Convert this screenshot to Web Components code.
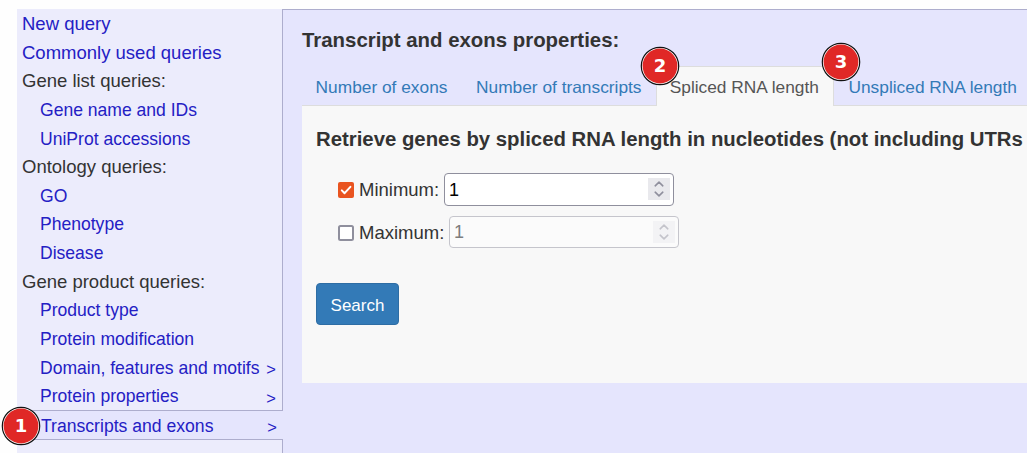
<!DOCTYPE html>
<html lang="en">
<head>
<meta charset="utf-8">
<title>Gene query</title>
<style>
html,body{margin:0;height:100%;overflow:hidden;background:#fefefe}
body{font-family:"Liberation Sans",Arial,sans-serif;font-size:18.5px;color:#333}
</style>
</head>
<body>
<query-page></query-page>
<script>
const define=(name,html)=>customElements.define(name,class extends HTMLElement{
  connectedCallback(){
    if(this.shadowRoot)return;
    this.attachShadow({mode:'open'}).innerHTML=html;
  }
});

define('step-badge',`<style>
:host{position:absolute;z-index:3;display:block;width:40px;height:40px}
svg{position:absolute;inset:0}
span{position:absolute;inset:0;font:bold 18px/39px "DejaVu Sans",sans-serif;color:#fff;text-align:center}
</style><svg width="40" height="40" viewBox="0 0 40 40"><circle cx="20" cy="20" r="18.7" fill="#fff" stroke="#111" stroke-width="1.2"/><circle cx="20" cy="20" r="17.4" fill="#e02826"/></svg><span><slot></slot></span>`);

define('nav-item',`<style>
:host{display:flex;box-sizing:border-box;height:28.65px;line-height:28.65px;padding:1px 6px 0 5px;justify-content:space-between;white-space:nowrap;color:#2420c4}
:host([heading]){color:#333}
:host([sub]){padding-left:23px;font-size:17.56px}
:host([more])::after{content:">";font-size:16.5px;padding-top:1.2px}
:host([active]){height:30px;padding:0 6px 0 24px;margin-right:-1px;background:#e5e5fd;border:solid #adadcd;border-width:1px 0;position:relative;z-index:1;line-height:30px;font-size:17.6px}
</style><span><slot></slot></span>`);

define('side-nav',`<style>
:host{display:block;width:265px;flex:none;background:#ececfc;border-right:1px solid #adadcd}
</style><slot></slot>`);

define('tab-item',`<style>
:host{display:block;box-sizing:border-box;height:40px;line-height:41px;padding:0 13px 0 12.6px;margin-right:1px;border:1px solid transparent;border-bottom:0;color:#337ab7;font-size:17.32px;white-space:nowrap;flex:none}
:host([active]){color:#555;background:#f8f8f8;border-color:#ddd;border-radius:3px 3px 0 0;margin-left:-.4px;padding-right:14px}
</style><span><slot></slot></span>`);

define('tab-bar',`<style>
:host{display:flex;height:39px;border-bottom:1px solid #ddd;box-sizing:content-box}
</style><slot></slot>`);

define('check-mark',`<style>
:host{display:block;width:16px;height:16px;flex:none;margin-top:1px}svg{display:block}
.on{display:none}:host([checked]) .on{display:block}:host([checked]) .off{display:none}
</style><svg class="on" width="16" height="16" viewBox="0 0 16 16"><rect width="16" height="16" rx="2" fill="#e95420"/><path d="M3.8 8.4 6.6 11.2 12.4 4.8" fill="none" stroke="#fff" stroke-width="2" stroke-linecap="round" stroke-linejoin="round"/></svg>
<svg class="off" width="16" height="16" viewBox="0 0 16 16"><rect x="1" y="1" width="14" height="14" rx="1.5" fill="#fff" stroke="#8f8f9d" stroke-width="2"/></svg>`);

define('number-field',`<style>
:host{display:flex;box-sizing:border-box;width:230px;height:33px;border:1px solid #8f8f9d;border-radius:4px;background:#fff;color:#000;align-items:center;justify-content:space-between;padding:0 3px 0 4px;flex:none;align-self:flex-start;font-size:18px}
span{padding-top:1px}
i{display:block;width:22px;height:22px;background:#e9e9ed;margin-top:-1px}
svg{display:block}
:host([disabled]){background:#fbfbfb;border-color:#c5c5cc;color:#7d7d7d;height:32px}
:host([disabled]) i{background:#f3f3f5}
:host([disabled]) path{stroke:#c4c4cb}
</style><span><slot></slot></span><i><svg width="22" height="22" viewBox="0 0 22 22"><path d="M7.2 7.8 11 4.2 14.8 7.8M7.2 14.2 11 17.8 14.8 14.2" fill="none" stroke="#8f8f9d" stroke-width="1.6" stroke-linecap="round" stroke-linejoin="round"/></svg></i>`);

define('range-row',`<style>
:host{display:flex;align-items:center;height:33px;padding-left:22px}
.label{margin-left:5px;white-space:nowrap;flex:none;width:var(--label-width)}
</style><slot name="check"></slot><span class="label"><slot></slot></span><slot name="field"></slot>`);

define('search-button',`<style>
:host{display:flex;box-sizing:border-box;width:83px;height:42px;border:1px solid #2e6da4;border-radius:4px;background:#337ab7;color:#fff;font-size:17px;align-items:center;justify-content:center;padding-top:3px}
</style><span><slot></slot></span>`);

define('query-panel',`<style>
:host{display:block;box-sizing:border-box;height:277px;background:#f8f8f8;padding:21px 0 0 14px;overflow:hidden}
h3{margin:0;font-size:20.35px;line-height:24px;white-space:nowrap}
.rows{padding:22px 0 34px;display:flex;flex-direction:column;gap:10px}
</style><h3>Retrieve genes by spliced RNA length in nucleotides (not including UTRs</h3>
<div class="rows"><range-row style="--label-width:85px"><check-mark slot="check" checked></check-mark>Minimum:<number-field slot="field">1</number-field></range-row>
<range-row style="--label-width:90px"><check-mark slot="check"></check-mark>Maximum:<number-field slot="field" disabled>1</number-field></range-row></div>
<search-button>Search</search-button>`);

define('query-page',`<style>
:host{display:flex;box-sizing:border-box;height:453px;padding:9px 0 0 17px;position:relative;overflow:hidden}
main{flex:1;min-width:0;box-sizing:border-box;border-top:1px solid #adadcd;background:#e5e5fd;padding:18px 0 0 19px}
h2{margin:0 0 14px;font-size:20.4px;line-height:24px;white-space:nowrap}
</style>
<side-nav>
<nav-item>New query</nav-item><nav-item>Commonly used queries</nav-item>
<nav-item heading>Gene list queries:</nav-item><nav-item sub>Gene name and IDs</nav-item><nav-item sub>UniProt accessions</nav-item>
<nav-item heading>Ontology queries:</nav-item><nav-item sub>GO</nav-item><nav-item sub>Phenotype</nav-item><nav-item sub>Disease</nav-item>
<nav-item heading>Gene product queries:</nav-item><nav-item sub>Product type</nav-item><nav-item sub>Protein modification</nav-item><nav-item sub more>Domain, features and motifs</nav-item><nav-item sub more>Protein properties</nav-item>
<nav-item active more>Transcripts and exons</nav-item>
</side-nav>
<main><h2>Transcript and exons properties:</h2>
<tab-bar><tab-item>Number of exons</tab-item><tab-item>Number of transcripts</tab-item><tab-item active>Spliced RNA length</tab-item><tab-item>Unspliced RNA length</tab-item></tab-bar>
<query-panel></query-panel></main>
<step-badge style="left:1px;top:406px">1</step-badge><step-badge style="left:640px;top:46px">2</step-badge><step-badge style="left:821px;top:42px">3</step-badge>`);
</script>
</body>
</html>
